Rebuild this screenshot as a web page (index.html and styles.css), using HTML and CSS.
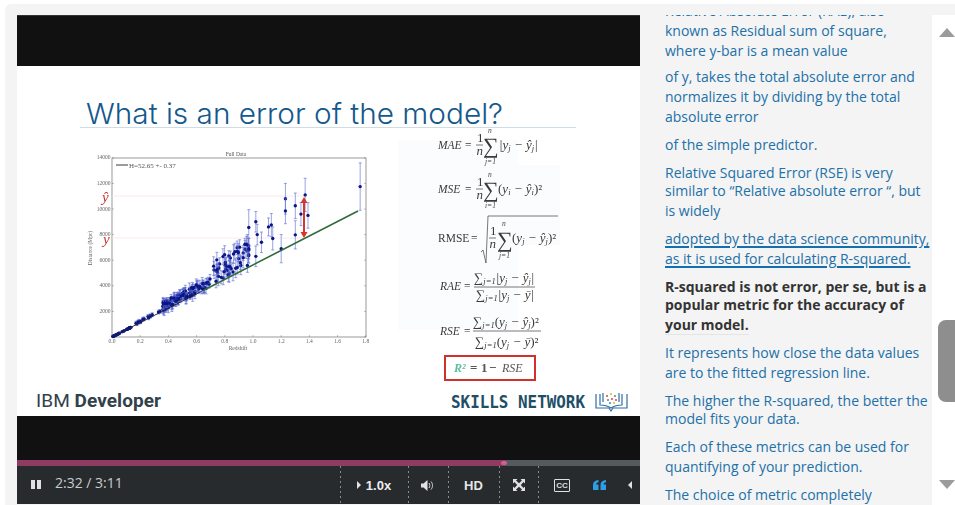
FILE: index.html
```html
<!DOCTYPE html>
<html lang="en">
<head>
    <meta charset="UTF-8" />
    <title>What is an error of the model?</title>
    <link rel="stylesheet" href="styles.css">
</head>
<body>
    <div class="panel">
        <div class="player">
            <div class="letterbox-top"></div>

            <svg class="slide" viewBox="17 66 623 350" width="623" height="350">
                <rect class="ghost" x="398" y="140" width="120" height="190" />
                <rect class="ghost" x="500" y="165" width="60" height="80" />

                <text class="slide-title" x="86" y="124" textLength="417" lengthAdjust="spacingAndGlyphs">What is an error of the model?</text>
                <line class="title-rule" x1="80" y1="127.5" x2="576" y2="127.5" />

                <g id="chart" class="soft"></g>

                <g class="soft">
                    <text class="f label i" x="438" y="149">MAE<tspan class="up" x="465">=</tspan></text>
                    <text class="f" x="477" y="142">1</text>
                    <line class="bar" x1="476" y1="145" x2="483" y2="145" />
                    <text class="f i" x="476.500" y="155">n</text>
                    <text class="sum" x="483" y="153">∑</text>
                    <text class="lim i" x="488" y="133">n</text>
                    <text class="lim i" x="485" y="164">j=1</text>
                    <text class="f i" x="499" y="149">|y<tspan class="sub" dy="2">j</tspan><tspan dy="-2"> − ŷ</tspan><tspan class="sub" dy="2">j</tspan><tspan dy="-2">|</tspan></text>

                    <text class="f label i" x="438" y="193">MSE<tspan class="up" x="465">=</tspan></text>
                    <text class="f" x="477" y="186">1</text>
                    <line class="bar" x1="476" y1="189" x2="483" y2="189" />
                    <text class="f i" x="476.500" y="199">n</text>
                    <text class="sum" x="483" y="197">∑</text>
                    <text class="lim i" x="488" y="177">n</text>
                    <text class="lim i" x="485" y="208">i=1</text>
                    <text class="f i" x="498" y="193"><tspan class="up">(</tspan>y<tspan class="sub" dy="2">i</tspan><tspan dy="-2"> − ŷ</tspan><tspan class="sub" dy="2">i</tspan><tspan class="up" dy="-2">)²</tspan></text>

                    <text class="f label" x="438" y="242">RMSE<tspan x="471">=</tspan></text>
                    <polyline class="root" points="481,252 483,250 486,263 488,216 558,216" />
                    <text class="f" x="490" y="235">1</text>
                    <line class="bar" x1="489" y1="238" x2="496" y2="238" />
                    <text class="f i" x="489.500" y="248">n</text>
                    <text class="sum" x="497" y="247">∑</text>
                    <text class="lim i" x="502" y="226">n</text>
                    <text class="lim i" x="499" y="258">j=1</text>
                    <text class="f i" x="512" y="242"><tspan class="up">(</tspan>y<tspan class="sub" dy="2">j</tspan><tspan dy="-2"> − ŷ</tspan><tspan class="sub" dy="2">j</tspan><tspan class="up" dy="-2">)²</tspan></text>

                    <text class="f label i" x="440" y="290">RAE<tspan class="up" x="464">=</tspan></text>
                    <text class="f i" x="474" y="282"><tspan class="up">∑</tspan><tspan class="sub" dy="2">j=1</tspan><tspan dy="-2">|y</tspan><tspan class="sub" dy="2">j</tspan><tspan dy="-2"> − ŷ</tspan><tspan class="sub" dy="2">j</tspan><tspan dy="-2">|</tspan></text>
                    <line class="bar" x1="474" y1="287" x2="535" y2="287" />
                    <text class="f i" x="476" y="299"><tspan class="up">∑</tspan><tspan class="sub" dy="2">j=1</tspan><tspan dy="-2">|y</tspan><tspan class="sub" dy="2">j</tspan><tspan dy="-2"> − ȳ|</tspan></text>

                    <text class="f label i" x="440" y="335">RSE<tspan class="up" x="464">=</tspan></text>
                    <text class="f i" x="473" y="326"><tspan class="up">∑</tspan><tspan class="sub" dy="2">j=1</tspan><tspan class="up" dy="-2">(</tspan>y<tspan class="sub" dy="2">j</tspan><tspan dy="-2"> − ŷ</tspan><tspan class="sub" dy="2">j</tspan><tspan class="up" dy="-2">)²</tspan></text>
                    <line class="bar" x1="473" y1="331" x2="541" y2="331" />
                    <text class="f i" x="475" y="346"><tspan class="up">∑</tspan><tspan class="sub" dy="2">j=1</tspan><tspan class="up" dy="-2">(</tspan>y<tspan class="sub" dy="2">j</tspan><tspan dy="-2"> − ȳ</tspan><tspan class="up">)²</tspan></text>

                    <rect class="r2-box" x="445" y="356" width="90" height="24" />
                    <text class="f f-r2 i" x="454" y="372"><tspan class="r2">R²</tspan><tspan class="up r2-num" x="470">=</tspan><tspan class="up r2-num" x="481">1</tspan><tspan class="up r2-num" x="489">−</tspan><tspan x="502">RSE</tspan></text>
                </g>

                <text class="ibm" x="36" y="407" textLength="125">IBM <tspan class="ibm-bold">Developer</tspan></text>
                <text class="skills" x="451" y="408" textLength="134" lengthAdjust="spacingAndGlyphs">SKILLS NETWORK</text>

                <g class="book">
                    <path d="M596 394v14h13l2 3 2-3h14v-14" />
                    <path d="M600 394v11c4 0 8 1 11 3 3-2 7-3 11-3v-11" />
                    <path d="M603 393v9M619 393v9" />
                </g>
                <circle cx="607" cy="396" r="1.1" fill="#e0533d" />
                <circle cx="611" cy="394" r="1.1" fill="#e9b83c" />
                <circle cx="615" cy="396" r="1.1" fill="#4aa564" />
                <circle cx="608" cy="400" r="1.1" fill="#4aa564" />
                <circle cx="612" cy="399" r="1.1" fill="#d9468f" />
                <circle cx="616" cy="400" r="1.1" fill="#e0533d" />
                <circle cx="610" cy="403" r="1.1" fill="#3f8fd0" />
                <circle cx="614" cy="403" r="1.1" fill="#e9b83c" />
            </svg>

            <div class="letterbox-bottom"></div>

            <div class="progress">
                <div class="progress-fill"><span class="progress-knob"></span></div>
            </div>

            <div class="controls">
                <div class="controls-left">
                    <svg class="icon-pause" width="10" height="9" viewBox="0 0 10 9"><path d="M0 0h4v9H0zM6 0h4v9H6z" /></svg>
                    <span class="time">2:32 / 3:11</span>
                </div>
                <div class="cell cell-speed">
                    <svg width="4" height="8" viewBox="0 0 4 8"><path d="M0 0l4 4-4 4z" /></svg>
                    <span>1.0x</span>
                </div>
                <div class="cell cell-volume">
                    <svg width="14" height="11" viewBox="0 0 14 11">
                        <path d="M0 3.5h2.5L6.5 0v11L2.5 7.500H0z" />
                        <path class="wave" d="M8 3c1 1.500 1 3.500 0 5M10 1.500c2 2.500 2 5.500 0 8" />
                    </svg>
                </div>
                <div class="cell cell-hd">HD</div>
                <div class="cell cell-full">
                    <svg width="12" height="12" viewBox="0 0 12 12">
                        <path d="M0 0h4.500L3 1.500 6 4.200 8.900 1.500 7.500 0H12v4.500L10.500 3 7.800 6l2.700 2.900L12 7.500V12H7.500L9 10.500 6 7.800 3 10.500 4.500 12H0V7.500L1.500 9 4.200 6 1.500 3 0 4.500z" />
                    </svg>
                </div>
                <div class="cell cell-last">
                    <span class="cc">CC</span>
                    <svg class="icon-quote" width="13" height="10" viewBox="0 0 13 10">
                        <path d="M0 10V5C0 2 2 .5 5.500 0v2.200C4 2.600 3.200 3.300 3 4.500h2.500V10zM7.500 10V5c0-3 2-4.500 5.500-5v2.200c-1.500.4-2.300 1.100-2.500 2.300H13V10z" />
                    </svg>
                    <svg class="icon-left" width="4" height="8" viewBox="0 0 4 8"><path d="M4 0L0 4l4 4z" /></svg>
                </div>
            </div>
        </div>

        <div class="transcript">
            <p>
                <span class="line">Relative Absolute Error (RAE), also</span>
                <span class="line">known as Residual sum of square,</span>
                <span class="line">where y-bar is a mean value</span>
            </p>
            <p class="after-first">
                <span class="line">of y, takes the total absolute error and</span>
                <span class="line">normalizes it by dividing by the total</span>
                <span class="line">absolute error</span>
            </p>
            <p>
                <span class="line">of the simple predictor.</span>
            </p>
            <p>
                <span class="line">Relative Squared Error (RSE) is very</span>
                <span class="line snug">similar to “Relative absolute error “, but</span>
                <span class="line">is widely</span>
            </p>
            <p class="active">
                <span class="line"><u>adopted by the data science community,</u></span>
                <span class="line"><u>as it is used for calculating R-squared.</u></span>
            </p>
            <p class="strong">
                <span class="line">R-squared is not error, per se, but is a</span>
                <span class="line snug">popular metric for the accuracy of</span>
                <span class="line"><span class="marked">your model.</span></span>
            </p>
            <p>
                <span class="line">It represents how close the data values</span>
                <span class="line">are to the fitted regression line.</span>
            </p>
            <p>
                <span class="line">The higher the R-squared, the better the</span>
                <span class="line snug">model fits your data.</span>
            </p>
            <p>
                <span class="line">Each of these metrics can be used for</span>
                <span class="line">quantifying of your prediction.</span>
            </p>
            <p>
                <span class="line">The choice of metric completely</span>
            </p>
        </div>

        <div class="scrollbar">
            <span class="arrow-up"></span>
            <span class="thumb"></span>
            <span class="arrow-down"></span>
        </div>
    </div>

    <script src="chart.js"></script>
</body>
</html>
```

FILE: styles.css
```css
html, body {
    margin: 0;
    height: 100%;
    overflow: hidden;
}

body {
    background-color: #fff;
    font-family: "Open Sans", sans-serif;
}

.panel {
    display: flex;
    align-items: flex-start;
    height: 501px;
    margin: 4px 0 0 5px;
    padding: 11px 0 0 12px;
    box-sizing: border-box;
    background-color: #f4f4f4;
    border-radius: 6px 0 0 0;
    overflow: hidden;
}

/* player */
.player {
    flex: 0 0 623px;
    width: 623px;
    height: 489px;
    background-color: #111;
}

.letterbox-top {
    height: 51px;
    background-color: #111;
    border-top: 1px solid #333;
    box-sizing: border-box;
}

.letterbox-bottom {
    height: 44px;
    background-color: #111;
}

.slide {
    display: block;
    background-color: #fff;
}

.soft {
    filter: blur(0.35px);
}

.ghost {
    fill: #fbfcfd;
}

.slide-title {
    font-family: Inter, sans-serif;
    font-size: 29px;
    font-weight: 300;
    fill: #14588c;
}

.title-rule {
    stroke: #cfdde8;
    stroke-width: 1;
}

.f {
    font-family: "Liberation Serif", serif;
    font-size: 13px;
    fill: #3a3a3a;
}

.f.label {
    font-size: 11.500px;
}

.f-r2 {
    font-size: 12px;
    fill: #555;
}

.r2-num {
    font-size: 13px;
    font-weight: 700;
}

.i {
    font-style: italic;
}

.up {
    font-style: normal;
}

.sub {
    font-size: 8.500px;
}

.sum {
    font-family: "Liberation Serif", serif;
    font-size: 22px;
    fill: #3a3a3a;
}

.lim {
    font-family: "Liberation Serif", serif;
    font-size: 7.500px;
    fill: #444;
}

.bar {
    stroke: #555;
    stroke-width: 0.8;
}

.root {
    fill: none;
    stroke: #555;
    stroke-width: 0.8;
}

.r2-box {
    fill: #fff;
    stroke: #d3302b;
    stroke-width: 2;
}

.r2 {
    font-weight: 700;
    fill: #5cbf9f;
}

.ibm {
    font-family: Roboto, sans-serif;
    font-size: 19px;
    fill: #33414a;
}

.ibm-bold {
    font-weight: 700;
}

.skills {
    font-family: "DejaVu Sans Mono", monospace;
    font-size: 18px;
    font-weight: 700;
    fill: #1f4f68;
}

.book path {
    fill: none;
    stroke: #2f6da5;
    stroke-width: 1.2;
}

/* chart */
.axis-box {
    fill: none;
    stroke: #555;
    stroke-width: 0.6;
}

.tick {
    font-family: "Liberation Serif", serif;
    font-size: 5.500px;
    fill: #666;
}

.tick-mark {
    stroke: #666;
    stroke-width: 0.4;
}

.chart-title {
    font-family: "Liberation Serif", serif;
    font-size: 5.500px;
    fill: #555;
}

.legend {
    font-family: "Liberation Serif", serif;
    font-size: 7px;
    fill: #555;
}

.guide {
    stroke: #f7e4e4;
    stroke-width: 0.8;
}

.guide-label {
    font-family: "Liberation Serif", serif;
    font-size: 15px;
    font-style: italic;
    fill: #c8352c;
}

.err {
    stroke: #5566cf;
    stroke-width: 0.6;
}

.dot {
    fill: #0b1585;
}

.fit-thin {
    stroke: #222;
    stroke-width: 0.9;
}

.fit {
    stroke: #2f6b3c;
    stroke-width: 1.6;
}

.red-arrow {
    stroke: #d8362a;
    stroke-width: 2;
}

.red-head {
    fill: #d8362a;
}

/* progress */
.progress {
    height: 6px;
    background-color: #555a5c;
}

.progress-fill {
    position: relative;
    width: 487px;
    height: 100%;
    background-color: #8f3c63;
}

.progress-knob {
    position: absolute;
    right: -3px;
    top: 1px;
    width: 6px;
    height: 4px;
    border-radius: 2px;
    background-color: #d65a94;
}

/* controls */
.controls {
    display: flex;
    align-items: stretch;
    height: 38px;
    background-color: #282b2e;
    color: #fff;
}

.controls svg {
    display: block;
    fill: #dfe1e2;
}

.controls-left {
    display: flex;
    align-items: center;
    flex: 0 0 323px;
    padding-left: 14px;
    box-sizing: border-box;
}

.icon-pause {
    margin-bottom: 2px;
}

.time {
    margin-left: 14px;
    padding-bottom: 5px;
    font-size: 14px;
    color: #c9cbcc;
}

.cell {
    display: flex;
    align-items: center;
    justify-content: center;
    box-sizing: border-box;
    background-image: repeating-linear-gradient(to bottom, #8a8c8e 0 2px, transparent 2px 5px);
    background-size: 1px 100%;
    background-repeat: no-repeat;
    font-family: "Liberation Sans", Arial, sans-serif;
    font-size: 13px;
    font-weight: 700;
}

.cell-speed {
    flex: 0 0 68px;
    gap: 5px;
    color: #eee;
}

.cell-volume {
    flex: 0 0 40px;
}

.wave {
    fill: none;
    stroke: #dfe1e2;
    stroke-width: 1;
}

.cell-hd {
    flex: 0 0 51px;
    color: #e4e5e6;
}

.cell-full {
    flex: 0 0 39px;
}

.cell-last {
    flex: 1;
    justify-content: flex-start;
    padding-left: 16px;
}

.cc {
    width: 14px;
    height: 11px;
    border: 1px solid #dfe1e2;
    border-radius: 1px;
    font-size: 8px;
    line-height: 11px;
    text-align: center;
    color: #dfe1e2;
}

.controls .icon-quote {
    margin-left: 23px;
    fill: #2e9ee8;
}

.controls .icon-left {
    margin-left: 22px;
}

/* transcript */
.transcript {
    flex: 0 0 292px;
    height: 490px;
    box-sizing: border-box;
    padding-left: 25px;
    overflow: hidden;
    font-size: 14px;
    color: #2270a8;
    white-space: nowrap;
}

.transcript p {
    margin: 8px 0 0;
}

.transcript p:first-child {
    margin-top: -14px;
}

.transcript .after-first {
    margin-top: 6px;
}

.line {
    display: block;
    line-height: 20px;
}

.line.snug {
    margin-top: -2px;
}

.active u {
    text-decoration: underline #1270b0 2px;
    text-underline-offset: 2px;
}

.strong {
    font-weight: 700;
    color: #333;
}

.marked {
    border-bottom: 1px solid #e4e4e4;
}

/* scrollbar */
.scrollbar {
    display: flex;
    flex-direction: column;
    align-items: flex-end;
    flex: 1;
    height: 490px;
    background-color: #fff;
}

.arrow-up {
    margin-top: 13px;
    border-left: 8px solid transparent;
    border-right: 8px solid transparent;
    border-bottom: 9px solid #9b9b9b;
}

.thumb {
    width: 17px;
    height: 82px;
    margin-top: 283px;
    border-radius: 8px 0 0 8px;
    background-color: #8e8e8e;
}

.arrow-down {
    margin-top: 78px;
    border-left: 8px solid transparent;
    border-right: 8px solid transparent;
    border-top: 9px solid #9b9b9b;
}
```

FILE: chart.js
```js
const SVG_NS = "http://www.w3.org/2000/svg";
const chart = document.getElementById("chart");

// redshift / distance to page pixels
const X0 = 112, X_SCALE = 141;
const Y0 = 337, Y_SCALE = 0.0128;
const px = z => X0 + z * X_SCALE;
const py = d => Y0 - d * Y_SCALE;

function add(tag, attrs, text) {
    const el = document.createElementNS(SVG_NS, tag);
    for (const k in attrs) el.setAttribute(k, attrs[k]);
    if (text) el.textContent = text;
    chart.appendChild(el);
    return el;
}

// small seeded generator so that the picture is the same on every load
let seed = 12345;
function rnd() {
    seed = (seed * 16807) % 2147483647;
    return seed / 2147483647;
}

add("rect", { class: "axis-box", x: X0, y: 158, width: 254, height: 179 });

for (let d = 0; d <= 14000; d += 2000) {
    add("line", { class: "tick-mark", x1: X0, y1: py(d), x2: X0 + 2, y2: py(d) });
    add("line", { class: "tick-mark", x1: 364, y1: py(d), x2: 366, y2: py(d) });
    if (d > 0) add("text", { class: "tick", x: 110.5, y: py(d) + 1.5, "text-anchor": "end" }, String(d));
}
for (let z = 0; z <= 18; z += 2) {
    const x = px(z / 10);
    add("line", { class: "tick-mark", x1: x, y1: 337, x2: x, y2: 335 });
    add("text", { class: "tick", x: x, y: 343, "text-anchor": "middle" }, (z / 10).toFixed(1));
}

add("text", { class: "chart-title", x: 236, y: 156, "text-anchor": "middle" }, "Full Data");
add("text", { class: "tick", x: 238, y: 350, "text-anchor": "middle" }, "Redshift");
add("text", { class: "tick", x: 92, y: 248, "text-anchor": "middle", transform: "rotate(-90 92 248)" }, "Distance (Mpc)");
add("line", { class: "fit-thin", x1: 116, y1: 165, x2: 128, y2: 165 });
add("text", { class: "legend", x: 129, y: 167.5 }, "H=52.65 +- 0.37");

add("line", { class: "guide", x1: X0, y1: 196, x2: 304, y2: 196 });
add("line", { class: "guide", x1: X0, y1: 238, x2: 304, y2: 238 });
add("text", { class: "guide-label", x: 102, y: 202 }, "ŷ");
add("text", { class: "guide-label", x: 103, y: 244 }, "y");

function point(z, d, err) {
    const x = px(z);
    add("line", { class: "err", x1: x, y1: py(d - err), x2: x, y2: py(d + err) });
    add("line", { class: "err", x1: x - 1.5, y1: py(d - err), x2: x + 1.5, y2: py(d - err) });
    add("line", { class: "err", x1: x - 1.5, y1: py(d + err), x2: x + 1.5, y2: py(d + err) });
    add("circle", { class: "dot", cx: x, cy: py(d), r: 1.7 });
}

// the low end of the line, almost no spread
for (let i = 0; i < 40; i++) {
    const z = 0.005 + rnd() * 0.13;
    point(z, z * 5650, 30);
}
for (let i = 0; i < 16; i++) {
    const z = 0.16 + rnd() * 0.18;
    point(z, z * 5700 + rnd() * 200, 150);
}
// main cluster
for (let i = 0; i < 110; i++) {
    const z = 0.36 + Math.pow(rnd(), 1.3) * 0.34;
    point(z, z * 5650 + (rnd() - 0.2) * 700 + 150, 200 + rnd() * 300);
}
for (let i = 0; i < 50; i++) {
    const z = 0.72 + rnd() * 0.26;
    point(z, z * 5650 + 100 + rnd() * 1900, 400 + rnd() * 350);
}

const farPoints = [
    [1.76, 11750, 1850], [1.37, 11100, 1300], [1.23, 10800, 1200], [1.23, 9850, 1000],
    [1.30, 10250, 1000], [1.34, 9600, 900], [1.39, 9500, 1000], [1.30, 7980, 1100],
    [1.20, 6900, 1100], [1.13, 8750, 900], [1.11, 8600, 700], [1.14, 7700, 900],
    [1.06, 7400, 800], [1.02, 9000, 800], [1.03, 8000, 800], [0.97, 8550, 1400],
    [1.02, 6300, 800], [0.96, 7200, 800], [0.97, 6900, 800], [0.93, 6200, 800]
];
farPoints.forEach(p => point(p[0], p[1], p[2]));

add("line", { class: "fit-thin", x1: X0, y1: Y0, x2: px(0.65), y2: py(0.65 * 5625) });
add("line", { class: "fit", x1: px(0.65), y1: py(0.65 * 5625), x2: 358, y2: 211 });

add("line", { class: "red-arrow", x1: 304, y1: 202, x2: 304, y2: 233 });
add("path", { class: "red-head", d: "M304 197l-3.500 6h7zM304 238l-3.500-6h7z" });
```
